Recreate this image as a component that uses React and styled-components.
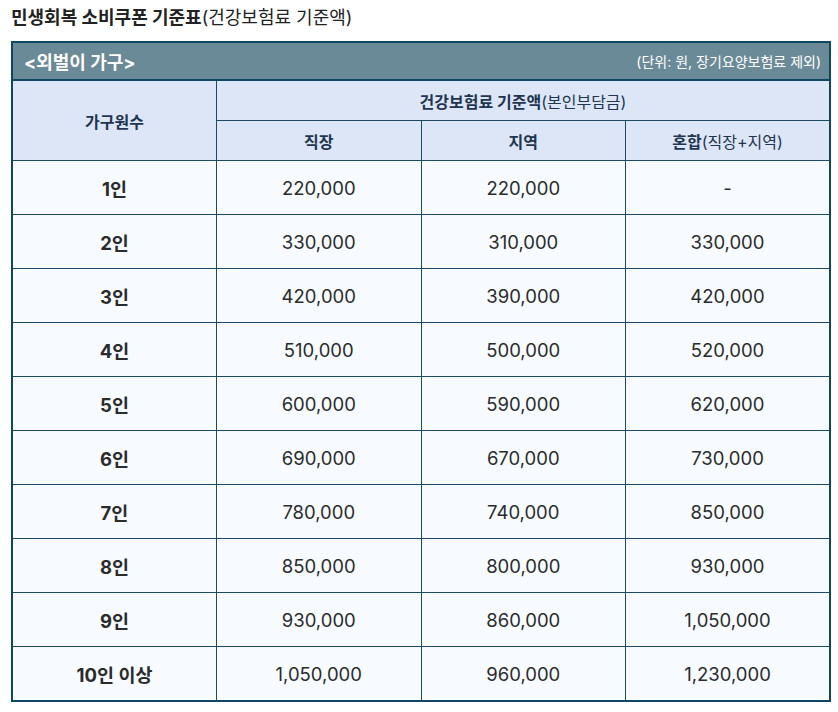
import styled, { createGlobalStyle } from "styled-components";

const GlobalStyle = createGlobalStyle`
  html, body {
    margin: 0;
    padding: 0;
    background: #ffffff;
  }
  body {
    font-family: Inter, "Noto Sans CJK KR", sans-serif;
    color: #333333;
  }
`;

const Page = styled.div`
  width: 838px;
  height: 712px;
  padding: 6px 0 0 11px;
  box-sizing: border-box;
`;

const Title = styled.h2`
  margin: 0 0 11px 0;
  font-size: 18px;
  line-height: 24px;
  font-weight: 700;
  color: #222222;
  span {
    font-weight: 400;
  }
`;

const Table = styled.table`
  width: 820px;
  border-collapse: collapse;
  table-layout: fixed;
  border: 2px solid #0d4863;
`;

const BarCell = styled.th`
  height: 36px;
  padding: 0 8px 0 11px;
  background: #6a8a97;
  border-bottom: 2px solid #0d4863;
  color: #ffffff;
  text-align: left;
`;

const Bar = styled.div`
  display: flex;
  align-items: center;
  justify-content: space-between;
`;

const BarTitle = styled.span`
  font-size: 18px;
  font-weight: 700;
`;

const BarNote = styled.span`
  font-size: 14px;
  font-weight: 400;
`;

const HeadCell = styled.th`
  height: 39px;
  padding: 0;
  background: #dde6f6;
  border: 1px solid #1b4a66;
  color: #1f3550;
  font-size: 16px;
  font-weight: 700;
  text-align: center;
  span {
    font-weight: 400;
  }
`;

const Cell = styled.td`
  height: 53px;
  padding: 0;
  background: #f7fbff;
  border: 1px solid #1b4a66;
  font-weight: ${(p) => (p.$bold ? 700 : 400)};
  font-size: 18.5px;
  color: #2b2b2b;
  text-align: center;
`;

const rows = [
  ["1인", "220,000", "220,000", "-"],
  ["2인", "330,000", "310,000", "330,000"],
  ["3인", "420,000", "390,000", "420,000"],
  ["4인", "510,000", "500,000", "520,000"],
  ["5인", "600,000", "590,000", "620,000"],
  ["6인", "690,000", "670,000", "730,000"],
  ["7인", "780,000", "740,000", "850,000"],
  ["8인", "850,000", "800,000", "930,000"],
  ["9인", "930,000", "860,000", "1,050,000"],
  ["10인 이상", "1,050,000", "960,000", "1,230,000"],
];

export default function App() {
  return (
    <Page>
      <GlobalStyle />
      <Title>
        민생회복 소비쿠폰 기준표<span>(건강보험료 기준액)</span>
      </Title>
      <Table>
        <colgroup>
          <col style={{ width: "25%" }} />
          <col style={{ width: "25%" }} />
          <col style={{ width: "25%" }} />
          <col style={{ width: "25%" }} />
        </colgroup>
        <thead>
          <tr>
            <BarCell colSpan={4}>
              <Bar>
                <BarTitle>&lt;외벌이 가구&gt;</BarTitle>
                <BarNote>(단위: 원, 장기요양보험료 제외)</BarNote>
              </Bar>
            </BarCell>
          </tr>
          <tr>
            <HeadCell rowSpan={2}>가구원수</HeadCell>
            <HeadCell colSpan={3}>
              건강보험료 기준액<span>(본인부담금)</span>
            </HeadCell>
          </tr>
          <tr>
            <HeadCell>직장</HeadCell>
            <HeadCell>지역</HeadCell>
            <HeadCell>
              혼합<span>(직장+지역)</span>
            </HeadCell>
          </tr>
        </thead>
        <tbody>
          {rows.map((r) => (
            <tr key={r[0]}>
              <Cell $bold>{r[0]}</Cell>
              <Cell>{r[1]}</Cell>
              <Cell>{r[2]}</Cell>
              <Cell>{r[3]}</Cell>
            </tr>
          ))}
        </tbody>
      </Table>
    </Page>
  );
}
